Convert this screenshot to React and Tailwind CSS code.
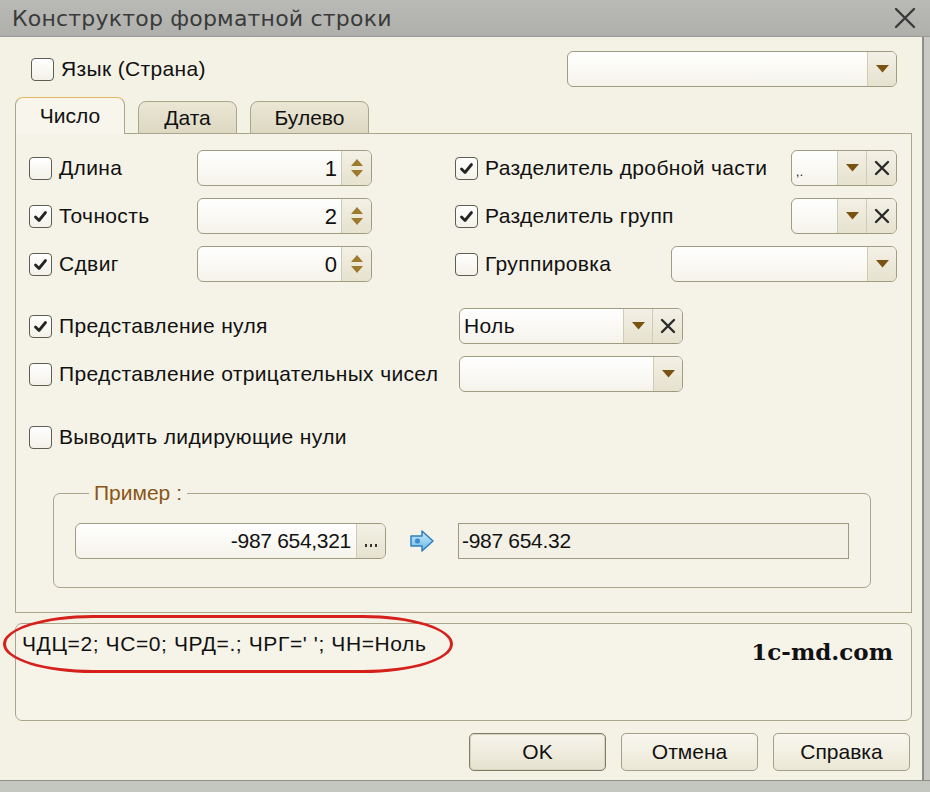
import React from "react";

const F = "font-['Liberation_Sans',Arial,sans-serif]";

function Check({ checked }) {
  return (
    <div className="w-[23px] h-[23px] shrink-0 rounded-[4px] border border-[#5f5e54] bg-gradient-to-b from-white to-[#f3f1e8] flex items-center justify-center">
      {checked && (
        <svg width="15" height="13" viewBox="0 0 15 13">
          <path d="M2.5 7 L6 10.5 L12.5 2.5" fill="none" stroke="#242424" strokeWidth="2.8" strokeLinecap="round" strokeLinejoin="round" />
        </svg>
      )}
    </div>
  );
}

function Tri() {
  return (
    <svg width="13" height="8" viewBox="0 0 13 8">
      <polygon points="0,0 13,0 6.5,7.5" fill="#7a5313" />
    </svg>
  );
}

function XIcon() {
  return (
    <svg width="16" height="16" viewBox="0 0 16 16">
      <path d="M2 2 L14 14 M14 2 L2 14" stroke="#2b2b2b" strokeWidth="2.4" strokeLinecap="round" />
    </svg>
  );
}

const box = "h-[36px] rounded-[6px] border border-[#a09c82] bg-gradient-to-b from-white to-[#f5f3ea] flex overflow-hidden";
const seg = "h-full flex items-center justify-center bg-gradient-to-b from-[#f3f1e6] to-[#e6e2cf] border-l border-[#cfcbb4]";
const txt = "text-[21px] tracking-[0.35px] text-[#111]";

function Combo({ width, text, clear }) {
  return (
    <div className={box} style={{ width }}>
      <div className={"flex-1 flex items-center px-[4px] " + txt}>{text}</div>
      <div className={seg + " w-[29px]"}><Tri /></div>
      {clear && <div className={seg + " w-[30px]"}><XIcon /></div>}
    </div>
  );
}

function Spin({ value }) {
  return (
    <div className={box + " w-[175px]"}>
      <div className="flex-1 flex items-center justify-end pr-[4px] text-[22px] text-[#111]">{value}</div>
      <div className={seg + " w-[30px] flex-col gap-[4px]"}>
        <svg width="12" height="7" viewBox="0 0 12 7"><polygon points="0,7 12,7 6,0" fill="#9c7c2c" /></svg>
        <svg width="12" height="7" viewBox="0 0 12 7"><polygon points="0,0 12,0 6,7" fill="#9c7c2c" /></svg>
      </div>
    </div>
  );
}

function Label({ checked, children }) {
  return (
    <div className="flex items-center gap-[7px]">
      <Check checked={checked} />
      <span className={txt + " whitespace-nowrap"}>{children}</span>
    </div>
  );
}

function TopRow({ lc, label, value, rc, rlabel, combo }) {
  return (
    <div className="flex items-center h-[36px]">
      <div className="w-[426px] flex items-center">
        <div className="w-[168px]"><Label checked={lc}>{label}</Label></div>
        <Spin value={value} />
      </div>
      <div className="flex-1 flex items-center justify-between">
        <Label checked={rc}>{rlabel}</Label>
        {combo}
      </div>
    </div>
  );
}

export default function App() {
  return (
    <div className={`${F} w-[930px] h-[792px] bg-[#c5c7c1] overflow-hidden relative`}>
      {/* Title bar */}
      <div className="h-[37px] bg-gradient-to-b from-[#b9bab6] to-[#afb0ac] flex items-center justify-between pl-[12px] pr-[14px] border-b border-[#9a9b96]">
        <span className="font-['DejaVu_Sans',sans-serif] text-[22px] text-[#3a3a3a] tracking-[0.2px]">Конструктор форматной строки</span>
        <svg width="22" height="22" viewBox="0 0 22 22">
          <path d="M2 2 L20 20 M20 2 L2 20" stroke="#3a3a3a" strokeWidth="2.4" strokeLinecap="round" />
        </svg>
      </div>

      <div className="flex h-[743px]">
        <div className="w-[924px] h-full bg-[#f4f1e5] border-r-2 border-[#8e8f8a] flex flex-col">
          {/* Language row */}
          <div className="flex items-center justify-between h-[36px] mt-[14px] pl-[31px] pr-[25px]">
            <Label checked={false}>Язык (Страна)</Label>
            <Combo width={330} />
          </div>

          {/* Tabs */}
          <div className="flex items-end h-[36px] mt-[11px] px-[15px] gap-[13px] relative z-10 -mb-px">
            <div className="w-[110px] h-[37px] rounded-t-[8px] border border-b-0 border-[#aaa68c] border-t-[#e0b860] bg-[#f7f5ec] flex items-center justify-center text-[21px] text-[#111]">Число</div>
            <div className="w-[99px] h-[33px] rounded-t-[8px] border border-[#aaa68c] bg-gradient-to-b from-[#ebe7d5] to-[#ddd8c2] flex items-center justify-center text-[21px] text-[#111]">Дата</div>
            <div className="w-[119px] h-[33px] rounded-t-[8px] border border-[#aaa68c] bg-gradient-to-b from-[#ebe7d5] to-[#ddd8c2] flex items-center justify-center text-[21px] text-[#111]">Булево</div>
          </div>

          {/* Panel */}
          <div className="ml-[15px] w-[897px] h-[480px] border border-[#aaa68c] bg-[#f5f2e7] pl-[13px] pr-[14px] pt-[16px] flex flex-col">
            <div className="flex flex-col gap-[12px]">
              <TopRow lc={false} label="Длина" value="1" rc={true} rlabel="Разделитель дробной части"
                combo={<Combo width={106} text={<span className="text-[12px] pt-[8px]">,.</span>} clear />} />
              <TopRow lc={true} label="Точность" value="2" rc={true} rlabel="Разделитель групп"
                combo={<Combo width={106} clear />} />
              <TopRow lc={true} label="Сдвиг" value="0" rc={false} rlabel="Группировка"
                combo={<Combo width={226} />} />
            </div>

            <div className="flex flex-col gap-[12px] mt-[26px]">
              <div className="flex items-center h-[36px]">
                <div className="w-[430px]"><Label checked={true}>Представление нуля</Label></div>
                <Combo width={224} text="Ноль" clear />
              </div>
              <div className="flex items-center h-[36px]">
                <div className="w-[430px]"><Label checked={false}>Представление отрицательных чисел</Label></div>
                <Combo width={224} />
              </div>
            </div>

            <div className="flex items-center h-[36px] mt-[27px]">
              <Label checked={false}>Выводить лидирующие нули</Label>
            </div>

            <fieldset className="mt-[26px] ml-[24px] w-[818px] h-[107px] border border-[#aaa68c] rounded-[7px] pl-[21px]">
              <legend className="ml-[14px] px-[5px] text-[21px] leading-[24px] text-[#8a5518]">Пример :</legend>
              <div className="flex items-center mt-[18px]">
                <div className={box + " w-[311px]"}>
                  <div className="flex-1 flex items-center justify-end pr-[5px] text-[21px] text-[#111] tracking-[-0.3px]">-987 654,321</div>
                  <div className="h-full w-[29px] flex items-end justify-center gap-[3px] pb-[11px] bg-gradient-to-b from-[#f3f1e6] to-[#e6e2cf] border-l border-[#cfcbb4]">
                    <span className="w-[2px] h-[3px] bg-[#333]" />
                    <span className="w-[2px] h-[3px] bg-[#333]" />
                    <span className="w-[2px] h-[3px] bg-[#333]" />
                  </div>
                </div>
                <div className="w-[72px] flex justify-center">
                  <svg width="24" height="22" viewBox="0 0 24 22">
                    <defs>
                      <linearGradient id="ag" x1="0" y1="0" x2="0" y2="1">
                        <stop offset="0" stopColor="#c9ecfb" />
                        <stop offset="1" stopColor="#6bb8e4" />
                      </linearGradient>
                    </defs>
                    <polygon points="1,6 12,6 12,1 23,11 12,21 12,16 1,16" fill="url(#ag)" stroke="#2f7fc0" strokeWidth="1.5" strokeLinejoin="round" />
                    <rect x="5" y="8.5" width="5" height="5" rx="2" fill="#3d8bd0" />
                  </svg>
                </div>
                <div className="w-[391px] h-[36px] border border-[#9e9a82] bg-[#f3f1e6] flex items-center pl-[3px] text-[21px] text-[#111] tracking-[-0.3px]">-987 654.32</div>
              </div>
            </fieldset>
          </div>

          {/* Result area */}
          <div className="ml-[15px] w-[897px] mt-[10px] h-[98px] border border-[#aaa68c] rounded-[7px] bg-[#f6f3e9] flex justify-between pl-[6px] pr-[18px] pt-[8px]">
            <span className="text-[21px] leading-[24px] tracking-[0.6px] text-[#111]">ЧДЦ=2; ЧС=0; ЧРД=.; ЧРГ=' '; ЧН=Ноль</span>
            <span className="font-['DejaVu_Serif',serif] font-bold text-[23px] leading-[30px] mt-[5px] text-[#111]">1c-md.com</span>
          </div>

          {/* Buttons */}
          <div className="flex justify-end gap-[15px] mt-[12px] pr-[12px]">
            <div className="w-[137px] h-[38px] rounded-[5px] border border-[#7f7b66] shadow-[inset_0_0_0_1px_#d9d4bd] bg-gradient-to-b from-[#f7f5ec] to-[#e6e2d0] flex items-center justify-center text-[21px] text-[#111]">OK</div>
            <div className="w-[137px] h-[38px] rounded-[5px] border border-[#a39f88] bg-gradient-to-b from-[#f9f7ef] to-[#ebe7d6] flex items-center justify-center text-[21px] text-[#111]">Отмена</div>
            <div className="w-[137px] h-[38px] rounded-[5px] border border-[#a39f88] bg-gradient-to-b from-[#f9f7ef] to-[#ebe7d6] flex items-center justify-center text-[21px] text-[#111]">Справка</div>
          </div>
        </div>
        <div className="flex-1 bg-[#c9cac6]" />
      </div>

      {/* bottom strip */}
      <div className="h-[12px] bg-[#c4c7bf] border-t border-[#8e8f8a]" />

      {/* Red annotation ellipse */}
      <div className="absolute left-[3px] top-[615px] w-[450px] h-[58px] rounded-[90px/29px] border-[3px] border-[#d6201c]" />
    </div>
  );
}
